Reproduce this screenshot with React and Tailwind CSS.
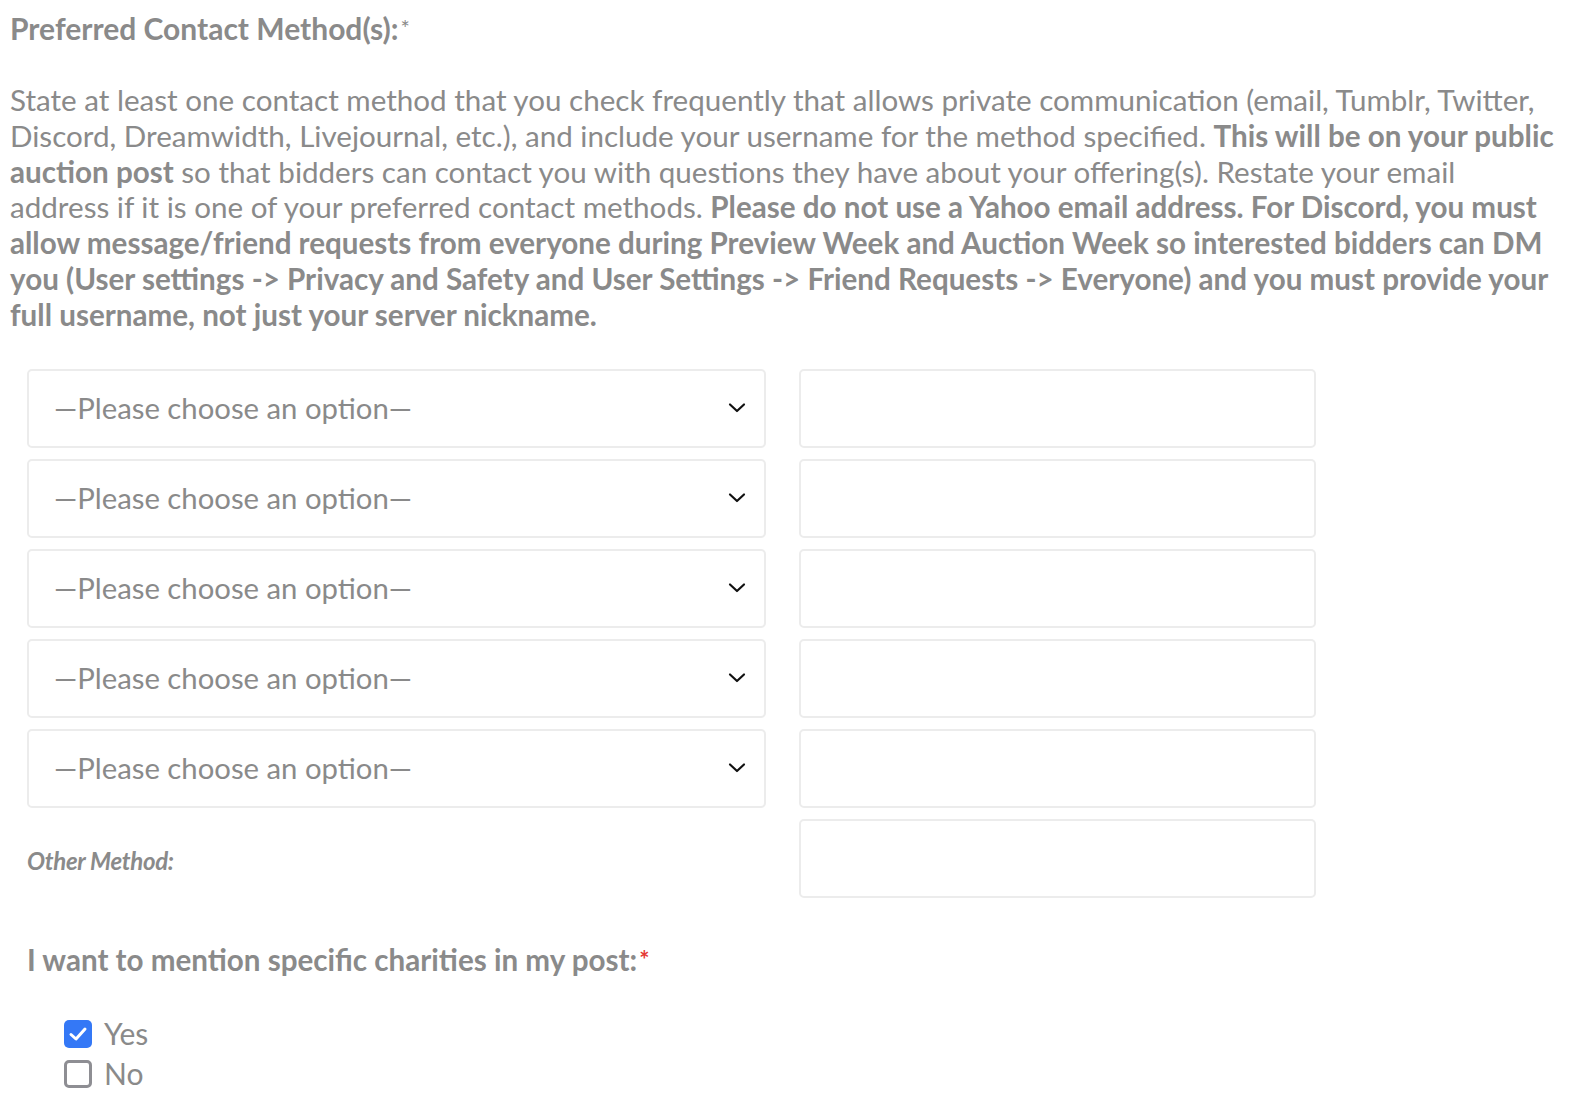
import React from "react";

function Chevron() {
  return (
    <svg width="18" height="12" viewBox="0 0 18 12" fill="none">
      <path d="M2 2.5 L9 9 L16 2.5" stroke="#111" strokeWidth="2.2" strokeLinecap="round" strokeLinejoin="round" />
    </svg>
  );
}

function SelectBox() {
  return (
    <div className="w-[739px] h-[79px] border-2 border-[#ececec] rounded-[5px] bg-white flex items-center justify-between pl-[25px] pr-[18px]">
      <span className="text-[29.3px] text-[#8a8a8a]">—Please choose an option—</span>
      <Chevron />
    </div>
  );
}

function InputBox() {
  return <div className="w-[517px] h-[79px] border-2 border-[#ececec] rounded-[5px] bg-white" />;
}

export default function App() {
  return (
    <div className="bg-white min-h-[1120px] w-[1582px] pl-[10px] pt-[10px] text-[#8a8a8a]" style={{ fontFamily: "Lato, 'Open Sans', sans-serif" }}>
      <div className="text-[30px] leading-[36px] font-bold">Preferred Contact Method(s):<span className="font-normal align-top text-[22px] ml-[2px]">*</span></div>
      <p className="mt-[36px] w-[1570px] whitespace-nowrap text-[29.6px] leading-[35.8px]">
        State at least one contact method that you check frequently that allows private communication (email, Tumblr, Twitter,<br />
        Discord, Dreamwidth, Livejournal, etc.), and include your username for the method specified. <b>This will be on your public</b><br />
        <b>auction post</b> so that bidders can contact you with questions they have about your offering(s). Restate your email<br />
        address if it is one of your preferred contact methods. <b>Please do not use a Yahoo email address. For Discord, you must</b><br />
        <b>allow message/friend requests from everyone during Preview Week and Auction Week so interested bidders can DM</b><br />
        <b>you (User settings -&gt; Privacy and Safety and User Settings -&gt; Friend Requests -&gt; Everyone) and you must provide your</b><br />
        <b>full username, not just your server nickname.</b>
      </p>
      <div className="mt-[36px] ml-[17px] flex flex-col gap-[11px]">
        {[0, 1, 2, 3, 4].map((i) => (
          <div key={i} className="flex gap-[33px]">
            <SelectBox />
            <InputBox />
          </div>
        ))}
        <div className="flex gap-[33px]">
          <div className="w-[739px] flex items-center">
            <span className="text-[24px] font-bold italic tracking-[-0.3px] pt-[6px]">Other Method:</span>
          </div>
          <InputBox />
        </div>
      </div>
      <div className="mt-[44px] ml-[17px] text-[29.6px] leading-[36px] font-bold">
        I want to mention specific charities in my post:<span className="text-[#e53935] align-top text-[24px] ml-[2px]">*</span>
      </div>
      <div className="mt-[42px] ml-[54px] flex flex-col gap-[12px]">
        <label className="flex items-center gap-[12px] h-[28px]">
          <span className="w-[28px] h-[28px] rounded-[5px] bg-[#3478f6] flex items-center justify-center">
            <svg width="20" height="16" viewBox="0 0 20 16" fill="none">
              <path d="M3 8.5 L8 13 L17 3" stroke="white" strokeWidth="3" strokeLinecap="round" strokeLinejoin="round" />
            </svg>
          </span>
          <span className="text-[30px]">Yes</span>
        </label>
        <label className="flex items-center gap-[12px] h-[28px]">
          <span className="w-[28px] h-[28px] rounded-[5px] border-[3px] border-[#8e8e93] bg-white" />
          <span className="text-[30px]">No</span>
        </label>
      </div>
    </div>
  );
}
